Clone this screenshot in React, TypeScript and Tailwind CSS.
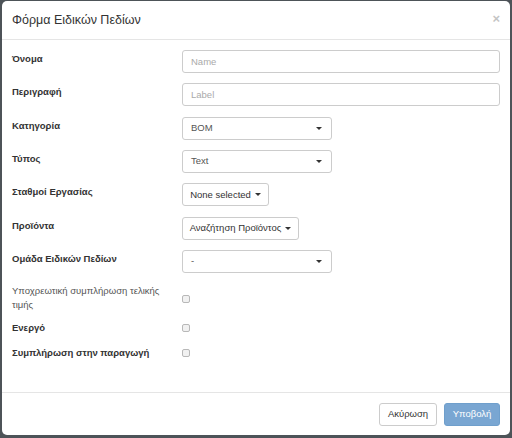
import { ChangeEvent, useState } from "react";

const font = { fontFamily: '"Liberation Sans", Arial, sans-serif' };

function Caret() {
  return (
    <span className="inline-block w-0 h-0 border-l-[3px] border-r-[3px] border-t-[3px] border-l-transparent border-r-transparent border-t-[#333]" />
  );
}

function Row({ label, children }: { label: string; children: React.ReactNode }) {
  return (
    <div className="flex items-start h-[23px]">
      <label className="w-[170px] shrink-0 pt-[2px] text-[9.5px] leading-[13px] font-bold text-[#333]">{label}</label>
      {children}
    </div>
  );
}

function Select({ value }: { value: string }) {
  return (
    <div className="w-[150px] h-[23px] border border-[#ccc] rounded-[3px] flex items-center justify-between pl-[8px] pr-[9px] text-[9.5px] text-[#555]">
      <span>{value}</span>
      <Caret />
    </div>
  );
}

function DropButton({ text, width }: { text: string; width: string }) {
  return (
    <button className={`${width} h-[23px] border border-[#ccc] rounded-[3px] flex items-center justify-center gap-[4px] text-[9.5px] text-[#333] bg-white`}>
      <span>{text}</span>
      <Caret />
    </button>
  );
}

function Check() {
  return <span className="inline-block w-[8px] h-[8px] border border-[#b8b8b8] rounded-[2px] bg-[#f1f1f1]" />;
}

export default function App() {
  const [name, setName] = useState("");
  const [desc, setDesc] = useState("");

  return (
    <div className="w-[512px] h-[438px] bg-[#4d5358] pt-px pl-[2px] pr-[2px] pb-[3px]" style={font}>
      <div className="h-full bg-white rounded-[5px] flex flex-col">
        {/* header */}
        <div className="h-[39px] shrink-0 border-b border-[#e5e5e5] flex items-center justify-between pl-[10px] pr-[10px]">
          <h4 className="text-[12.5px] text-[#333] leading-none">Φόρμα Ειδικών Πεδίων</h4>
          <span className="text-[13px] font-bold text-[#c4c4c4] leading-none -mt-[3px]">×</span>
        </div>

        {/* body */}
        <div className="flex-1 pl-[10px] pr-[10px] pt-[10px]">
          <div className="flex flex-col gap-[10.35px]">
            <Row label="Όνομα">
              <input
                value={name}
                onChange={(e: ChangeEvent<HTMLInputElement>) => setName(e.target.value)}
                placeholder="Name"
                className="flex-1 h-[23px] border border-[#ccc] rounded-[3px] px-[8px] text-[9.5px] text-[#555] placeholder:text-[#aaa] outline-none"
              />
            </Row>
            <Row label="Περιγραφή">
              <input
                value={desc}
                onChange={(e: ChangeEvent<HTMLInputElement>) => setDesc(e.target.value)}
                placeholder="Label"
                className="flex-1 h-[23px] border border-[#ccc] rounded-[3px] px-[8px] text-[9.5px] text-[#555] placeholder:text-[#aaa] outline-none"
              />
            </Row>
            <Row label="Κατηγορία">
              <Select value="BOM" />
            </Row>
            <Row label="Τύπος">
              <Select value="Text" />
            </Row>
            <Row label="Σταθμοί Εργασίας">
              <DropButton text="None selected" width="w-[87px]" />
            </Row>
            <Row label="Προϊόντα">
              <DropButton text="Αναζήτηση Προϊόντος" width="w-[117px]" />
            </Row>
            <Row label="Ομάδα Ειδικών Πεδίων">
              <Select value="-" />
            </Row>
          </div>

          {/* checkboxes */}
          <div className="flex items-start mt-[11px]">
            <div className="w-[170px] shrink-0 pr-[10px]">
              <label className="block text-[9.5px] leading-[14px] text-[#555]">
                Υποχρεωτική συμπλήρωση τελικής τιμής
              </label>
            </div>
            <div className="pt-[2px]">
              <Check />
            </div>
          </div>
          <div className="flex items-center mt-[9px] h-[14px]">
            <label className="w-[170px] shrink-0 text-[9.5px] leading-[14px] font-bold text-[#333]">Ενεργό</label>
            <Check />
          </div>
          <div className="flex items-center mt-[11px] h-[14px]">
            <label className="w-[170px] shrink-0 text-[9.5px] leading-[14px] font-bold text-[#333]">
              Συμπλήρωση στην παραγωγή
            </label>
            <Check />
          </div>
        </div>

        {/* footer */}
        <div className="h-[43px] shrink-0 border-t border-[#e5e5e5] flex items-start justify-end gap-[7px] pt-[10px] pr-[10px]">
          <button className="w-[58px] h-[23px] border border-[#ccc] rounded-[3px] bg-white text-[9.5px] text-[#333]">Ακύρωση</button>
          <button className="w-[56px] h-[23px] border border-[#6f9fcc] rounded-[3px] bg-[#79a6d2] text-[9.5px] text-white">Υποβολή</button>
        </div>
      </div>
    </div>
  );
}
